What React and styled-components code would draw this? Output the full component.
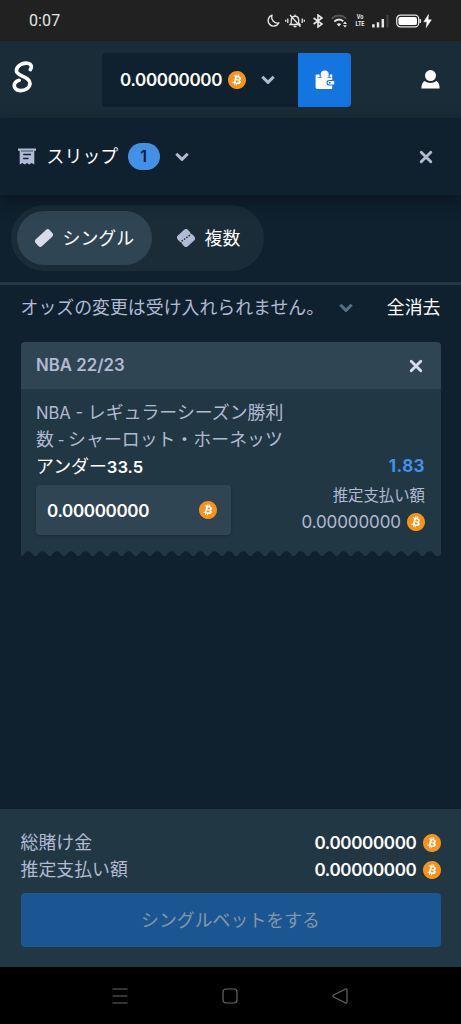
import React from 'react';
import styled, { createGlobalStyle } from 'styled-components';
import { SiBitcoin } from 'react-icons/si';

const GlobalStyle = createGlobalStyle`
  * { box-sizing: border-box; }
  body {
    margin: 0;
    background: #0f212e;
    font-family: Inter, 'Noto Sans CJK JP', sans-serif;
    font-size: 17.9px;
    line-height: 27px;
    color: #fff;
  }
  button { font: inherit; color: inherit; border: 0; padding: 0; background: none; }
  svg { display: block; flex-shrink: 0; }
`;

const Screen = styled.div`
  display: flex;
  flex-direction: column;
  width: 461px;
  height: 1024px;
  overflow: hidden;
`;

const StatusBar = styled.div`
  display: flex;
  align-items: center;
  justify-content: space-between;
  height: 41px;
  padding: 0 29px;
  background: #212121;
  color: #e6e6e6;
`;
const Clock = styled.span`
  font-family: Roboto, sans-serif;
  font-size: 16px;
  letter-spacing: 0.1px;
`;
const StatusIcons = styled.div`
  display: flex;
  align-items: center;
  height: 20px;
`;
const StatusIcon = styled.svg`
  margin-left: ${p => p.$gap || 0}px;
`;
const Volte = styled.span`
  display: flex;
  flex-direction: column;
  align-items: center;
  width: 10px;
  margin-left: 7px;
  font: 700 5.4px/6.4px Roboto, sans-serif;
  transform: scale(1.02, 1.25);
`;

const Header = styled.header`
  display: flex;
  align-items: center;
  height: 77px;
  padding: 0 21px 0 12px;
  background: #1a2c38;
`;
const LogoMark = styled.svg`
  margin-bottom: 5px;
`;
const Wallet = styled.div`
  display: flex;
  height: 54px;
  margin: 0 auto 0 68px;
  border-radius: 4px;
  overflow: hidden;
`;
const Balance = styled.div`
  display: flex;
  align-items: center;
  gap: 15px;
  width: 196px;
  padding-left: 18px;
  background: #0f212e;
`;
const WalletButton = styled.button`
  display: grid;
  place-items: center;
  width: 53px;
  background: #1475e1;
`;
const Amount = styled.span`
  display: flex;
  align-items: center;
  gap: 6px;
  height: 27px;
  padding-top: 2px;
  font-size: 17px;
  font-weight: ${p => (p.$muted ? 400 : 600)};
  letter-spacing: ${p => (p.$muted ? '-0.1px' : '-0.33px')};
  color: ${p => (p.$muted ? '#b1bad3' : '#fff')};
`;
const CoinDisc = styled.span`
  display: block;
  width: 18px;
  height: 18px;
  margin-top: ${p => (p.$inline ? '-2px' : 0)};
  border-radius: 50%;
  background: radial-gradient(circle, #fff 60%, transparent 62%);
  color: #f7931a;
`;

const SlipHeader = styled.div`
  position: relative;
  display: flex;
  align-items: center;
  height: 77px;
  padding: 0 28px 0 18px;
  background: #0f212e;
  box-shadow: 0 6px 14px rgba(5, 14, 18, 0.6);
`;
const SlipTitle = styled.span`
  margin-left: 10.6px;
`;
const CountBadge = styled.span`
  display: grid;
  place-items: center;
  width: 32px;
  height: 27px;
  margin: 0 15px 0 9.5px;
  border-radius: 14px;
  background: #4391e7;
  color: #0f212e;
  font-size: 16px;
  font-weight: 600;
`;
const Spacer = styled.div`
  flex: 1;
`;

const TabsArea = styled.div`
  height: 90px;
  padding: 10px 0 0 10.5px;
  border-bottom: 3px solid #213743;
`;
const Tabs = styled.div`
  display: inline-flex;
  gap: 6.5px;
  height: 66px;
  padding: 6px;
  border-radius: 33px;
  background: #1a2c38;
`;
const Tab = styled.button`
  display: flex;
  align-items: center;
  gap: 10px;
  padding: 0 18px;
  border-radius: 27px;
  background: ${p => (p.$active ? '#2f4553' : 'transparent')};
  color: #fff;
`;

const Options = styled.div`
  display: flex;
  align-items: center;
  height: 45px;
  padding: 0 20.5px;
  color: #b1bad3;
`;
const OddsRule = styled.span`
  margin-right: 15px;
`;
const ClearAll = styled.button`
  color: #fff;
`;

const Card = styled.section`
  display: flex;
  flex-direction: column;
  width: 420px;
  margin: 12px 0 0 20.5px;
`;
const CardHead = styled.div`
  display: flex;
  align-items: center;
  justify-content: space-between;
  height: 47px;
  padding: 0 18px 0 15.5px;
  border-radius: 4px 4px 0 0;
  background: #2f4553;
  color: #b1bad3;
  font-size: 16.8px;
  font-weight: 600;
`;
const CardBody = styled.div`
  height: 162px;
  padding: 10px 15.5px 0;
  background: #213743;
`;
const MarketLine = styled.div`
  display: flex;
  align-items: baseline;
  height: 27px;
  white-space: pre;
  color: #b1bad3;
`;
const TeamLine = styled(MarketLine)`
  font-family: 'Noto Sans CJK JP', sans-serif;
  line-height: 25px;
`;
const Row = styled.div`
  display: flex;
  align-items: center;
  justify-content: space-between;
`;
const Latin = styled.span`
  font-size: 16.6px;
  font-weight: ${p => p.$weight || 400};
`;
const Selection = styled.div`
  display: flex;
  align-items: baseline;
  height: 27px;
`;
const Odds = styled.span`
  color: #4391e7;
  font-size: 17px;
  font-weight: 700;
  letter-spacing: 0.4px;
`;
const StakeRow = styled(Row)`
  align-items: flex-start;
  margin-top: 5px;
`;
const StakeInput = styled.div`
  display: flex;
  align-items: center;
  justify-content: space-between;
  width: 195px;
  height: 50px;
  padding: 0 14px 0 11px;
  border-radius: 4px;
  background: #2f4553;
  box-shadow: 0 1px 3px rgba(0, 0, 0, 0.2);
`;
const Payout = styled.div`
  display: flex;
  flex-direction: column;
  align-items: flex-end;
  gap: 2px;
  color: #b1bad3;
`;
const PayoutLabel = styled.span`
  font-size: 15.4px;
  line-height: 21px;
`;

const Footer = styled.footer`
  height: 158px;
  padding: 20px 20.5px 0;
  background: #213743;
`;
const TotalLabel = styled.span`
  color: #b1bad3;
`;
const BetButton = styled.button`
  display: block;
  width: 100%;
  height: 54px;
  margin-top: 10px;
  border-radius: 4px;
  background: #1b5693;
  color: #8496a8;
`;
const NavBar = styled.nav`
  display: flex;
  align-items: center;
  justify-content: center;
  gap: 92px;
  height: 57px;
  padding-right: 1px;
  background: #000;
`;

const Coin = ({ inline }) => (
  <CoinDisc $inline={inline}>
    <SiBitcoin size={18} />
  </CoinDisc>
);

const Chevron = ({ color = '#b1bad3' }) => (
  <svg width="14" height="10" viewBox="0 0 14 10" fill="none" stroke={color} strokeWidth="3">
    <path d="M1.3 1.8 L7 7.4 L12.7 1.8" strokeLinejoin="round" />
  </svg>
);

const Close = ({ color = '#b1bad3' }) => (
  <svg width="14" height="14" viewBox="0 0 14 14" stroke={color} strokeWidth="2.9">
    <path d="M2.2 2.2 L11.8 11.8 M11.8 2.2 L2.2 11.8" strokeLinecap="round" />
  </svg>
);

const Logo = () => (
  <LogoMark width="22" height="32" viewBox="0 0 22 32" fill="none" stroke="#fff" strokeWidth="3.6" strokeLinecap="round" strokeLinejoin="round">
    <path d="M18.3 8.6 C20.2 6 19.6 2.8 15.5 2.2 C10 1.6 4.4 5 4.4 9.8 C4.4 15.5 18 15.5 18 22.2 C18 27 13 29.8 8 29.6 C3 29.4 1.2 25 3 22 C3.9 20.4 5.4 19.5 7.2 19.2" />
  </LogoMark>
);

const WalletIcon = () => (
  <svg width="20" height="20" viewBox="0 0 20 20">
    <path d="M1.6 4.6 H4.6 V6.8 H14.8 V4.6 H17.2 V10 H13.8 Q11.4 10.2 11.4 12.6 Q11.4 15.2 13.8 15.4 H17.2 V18 Q17.2 19 16.2 19 H2 Q.6 19 .6 17.6 V5.6 Q.6 4.6 1.6 4.6 Z" fill="#fff" />
    <path d="M2.8 7.6 H16" stroke="#1475e1" strokeWidth=".8" />
    <circle cx="9.7" cy="4.6" r="4" fill="#fff" />
    <path d="M14.4 11 H19.2 V14.4 H14.4 Q12.6 14.2 12.6 12.7 Q12.6 11.2 14.4 11 Z" fill="#fff" />
    <circle cx="14.8" cy="12.7" r=".9" fill="#1475e1" />
  </svg>
);

const UserIcon = () => (
  <svg width="19" height="19" viewBox="0 0 19 19" fill="#fff">
    <circle cx="9.5" cy="5.6" r="5.5" />
    <path d="M3.4 11 Q9.5 15 15.6 11 Q18.6 13 18.6 18.6 H.4 Q.4 13 3.4 11 Z" />
  </svg>
);

const SlipIcon = () => (
  <svg width="18" height="17" viewBox="0 0 18 17">
    <path d="M0 .4 H18 V2.8 H16.3 V16.4 L13.6 15 L11.3 16.4 L9 15 L6.7 16.4 L4.4 15 L1.7 16.4 V2.8 H0 Z" fill="#b1bad3" />
    <path d="M5.2 6.4 H13 M5.2 10.4 H10.5" stroke="#0f212e" strokeWidth="1.5" />
    <path d="M3 3 H15" stroke="#0f212e" strokeWidth=".7" />
  </svg>
);

const SingleIcon = () => (
  <svg width="18" height="18" viewBox="0 0 18 18" fill="#d5dceb">
    <rect x="-.5" y="4.4" width="19" height="9.2" rx="2.6" transform="rotate(-43 9 9)" />
  </svg>
);

const MultiIcon = () => (
  <svg width="18" height="18" viewBox="0 0 18 18">
    <g fill="#b1bad3">
      <rect x="-.3" y="2.6" width="14" height="8" rx="2.8" transform="rotate(-42 6.7 6.6)" />
      <rect x="4.3" y="7.4" width="14" height="8" rx="2.8" transform="rotate(-42 11.3 11.4)" />
    </g>
    <path d="M4.6 12.2 L13.6 5.6" stroke="#1a2c38" strokeWidth="1.5" strokeDasharray="1.5 1.4" />
  </svg>
);

const bites = Array.from({ length: 29 }, (_, i) => 7.2 + i * 14.34);
const TornEdge = () => (
  <svg width="420" height="5" viewBox="0 0 420 5">
    <path
      fill="#213743"
      d={`M0 0 H420 V2.5 Q420 5 417 5 H413.5 ${[...bites]
        .reverse()
        .map(x => `L${x + 6.4} 5 Q${x + 5} 4.6 ${x + 4} 2.4 Q${x} -1.8 ${x - 4} 2.4 Q${x - 5} 4.6 ${x - 6.4} 5`)
        .join(' ')} H0 Z`}
    />
  </svg>
);

const StatusGlyphs = () => (
  <StatusIcons>
    <StatusIcon width="13" height="13" viewBox="0 0 13 13" fill="none" stroke="#e6e6e6" strokeWidth="1.4">
      <path d="M5 1.2 A5.6 5.6 0 1 0 11.8 9 A6 6 0 0 1 5 1.2 Z" strokeLinejoin="round" />
    </StatusIcon>
    <StatusIcon $gap={5} width="20" height="14" viewBox="0 0 20 14" fill="none" stroke="#e6e6e6" strokeWidth="1.3">
      <path d="M5 10.5 H15 L13.7 8.8 V5.6 Q13.3 2.4 10 2.2 Q6.7 2.4 6.3 5.6 V8.8 Z M8.5 12.5 H11.5 M10 .5 V2 M5 1 L15.5 12.8 M2.8 4.5 V9 M.7 5.8 V7.8 M17.2 4.5 V9 M19.3 5.8 V7.8" />
    </StatusIcon>
    <StatusIcon $gap={8} width="10" height="14" viewBox="0 0 10 14" fill="none" stroke="#e6e6e6" strokeWidth="1.6">
      <path d="M.6 4 L9 10 L5 13 V1 L9 4 L.6 10" />
    </StatusIcon>
    <StatusIcon $gap={8} width="17" height="14" viewBox="0 0 17 14" fill="none" stroke="#e6e6e6" strokeWidth="1.9">
      <path d="M.7 4.6 Q8 -1.6 15.3 4.6" stroke="#555" />
      <path d="M3.3 7.6 Q8 3.8 12.2 7.2" />
      <path d="M5.6 10 Q8 8.4 10.2 10 L8 12.6 Z" fill="#e6e6e6" stroke="none" />
      <path d="M12 10 L14 7.6 L16 10 Z M12 11.2 L14 13.6 L16 11.2 Z" fill="#e6e6e6" stroke="none" />
    </StatusIcon>
    <Volte>
      <span>Vo</span>
      <span>LTE</span>
    </Volte>
    <StatusIcon $gap={7} width="17" height="14" viewBox="0 0 17 14" stroke="#e6e6e6" strokeWidth="2.5">
      <path d="M1.4 13.5 V10.3 M6 13.5 V8.3 M10.8 13.5 V5" />
      <path d="M15.5 13.5 V1" stroke="#444" strokeWidth="2" />
    </StatusIcon>
    <StatusIcon $gap={7} width="36" height="14" viewBox="0 0 36 14">
      <rect x=".7" y="1.2" width="22" height="11.6" rx="3.6" fill="none" stroke="#e6e6e6" strokeWidth="1.2" />
      <rect x="2.4" y="2.9" width="18.6" height="8.2" rx="2.2" fill="#fff" />
      <path d="M24 5 Q25.6 7 24 9 Z" fill="#e6e6e6" stroke="#e6e6e6" />
      <path d="M32.5 .5 L27.8 7.8 H31 L30.2 13.6 L35.4 5.8 H32 Z" fill="#fff" stroke="#fff" strokeWidth=".5" />
    </StatusIcon>
  </StatusIcons>
);

const Total = ({ label }) => (
  <Row>
    <TotalLabel>{label}</TotalLabel>
    <Amount>
      0.00000000 <Coin inline />
    </Amount>
  </Row>
);

const App = () => (
  <Screen>
    <GlobalStyle />
    <StatusBar>
      <Clock>0:07</Clock>
      <StatusGlyphs />
    </StatusBar>
    <Header>
      <Logo />
      <Wallet>
        <Balance>
          <Amount>
            0.00000000 <Coin inline />
          </Amount>
          <Chevron />
        </Balance>
        <WalletButton>
          <WalletIcon />
        </WalletButton>
      </Wallet>
      <UserIcon />
    </Header>
    <SlipHeader>
      <SlipIcon />
      <SlipTitle>スリップ</SlipTitle>
      <CountBadge>1</CountBadge>
      <Chevron />
      <Spacer />
      <Close />
    </SlipHeader>
    <TabsArea>
      <Tabs>
        <Tab $active>
          <SingleIcon />
          シングル
        </Tab>
        <Tab>
          <MultiIcon />
          複数
        </Tab>
      </Tabs>
    </TabsArea>
    <Options>
      <OddsRule>オッズの変更は受け入れられません。</OddsRule>
      <Chevron color="#557086" />
      <Spacer />
      <ClearAll>全消去</ClearAll>
    </Options>
    <Card>
      <CardHead>
        NBA 22/23
        <Close color="#d5dceb" />
      </CardHead>
      <CardBody>
        <MarketLine>
          <Latin>{'NBA - '}</Latin>
          <span>レギュラーシーズン勝利</span>
        </MarketLine>
        <TeamLine>数 - シャーロット・ホーネッツ</TeamLine>
        <Row>
          <Selection>
            <span>アンダー</span>
            <Latin $weight={600}>33.5</Latin>
          </Selection>
          <Odds>1.83</Odds>
        </Row>
        <StakeRow>
          <StakeInput>
            <Amount>0.00000000</Amount>
            <Coin />
          </StakeInput>
          <Payout>
            <PayoutLabel>推定支払い額</PayoutLabel>
            <Amount $muted>
              0.00000000 <Coin inline />
            </Amount>
          </Payout>
        </StakeRow>
      </CardBody>
      <TornEdge />
    </Card>
    <Spacer />
    <Footer>
      <Total label="総賭け金" />
      <Total label="推定支払い額" />
      <BetButton>シングルベットをする</BetButton>
    </Footer>
    <NavBar>
      <svg width="18" height="18" viewBox="0 0 18 18" stroke="#666" strokeWidth="1.2">
        <path d="M1.5 2 H16.5 M1.5 9 H16.5 M1.5 16 H16.5" />
      </svg>
      <svg width="18" height="18" viewBox="0 0 18 18" fill="none" stroke="#666" strokeWidth="1.2">
        <rect x="2" y="2" width="14" height="14" rx="3" />
      </svg>
      <svg width="18" height="18" viewBox="0 0 18 18" fill="none" stroke="#666" strokeWidth="1.2">
        <path d="M14.5 2 Q16 1.6 16 3 V15 Q16 16.4 14.5 16 L2.6 10 Q1.4 9 2.6 8 Z" />
      </svg>
    </NavBar>
  </Screen>
);

export default App;
